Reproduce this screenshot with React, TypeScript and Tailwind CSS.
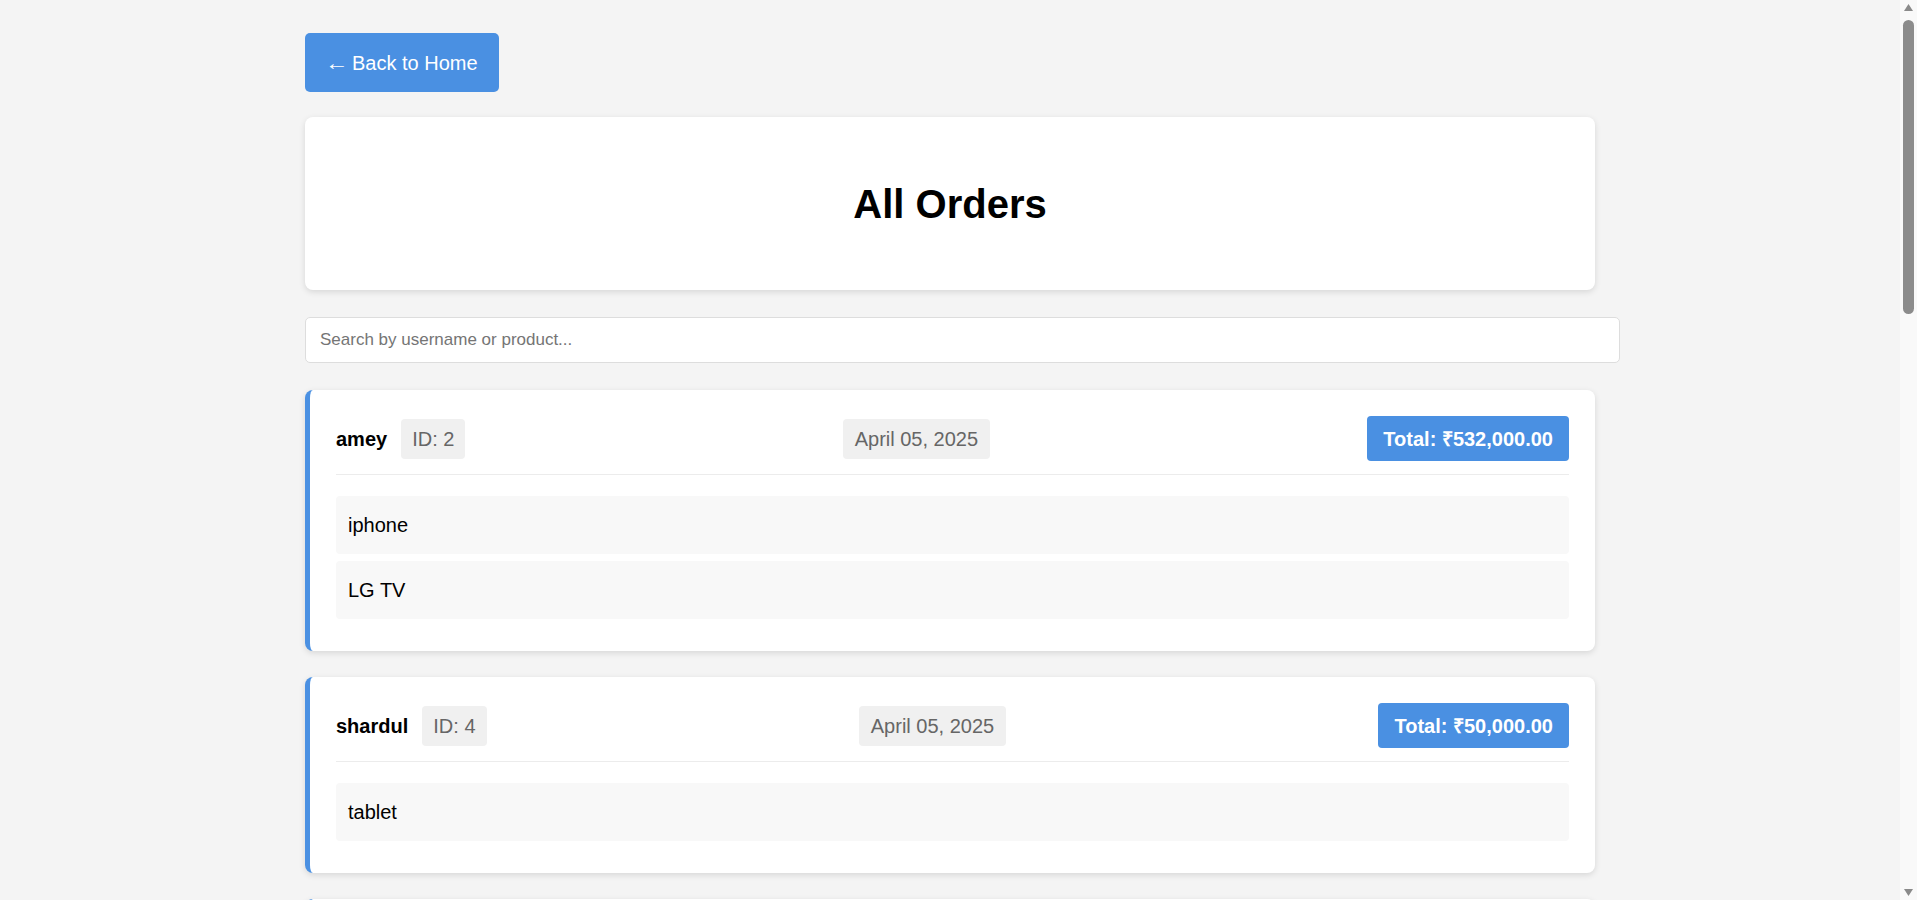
import React, { useState } from "react";

type Order = {
  id: number;
  username: string;
  date: string;
  total: number;
  products: string[];
};

const orders: Order[] = [
  { id: 2, username: "amey", date: "April 05, 2025", total: 532000, products: ["iphone", "LG TV"] },
  { id: 4, username: "shardul", date: "April 05, 2025", total: 50000, products: ["tablet"] },
  { id: 5, username: "rahul", date: "April 06, 2025", total: 85000, products: ["laptop", "mouse"] },
  { id: 7, username: "amey", date: "April 07, 2025", total: 12000, products: ["headphones"] },
  { id: 8, username: "priya", date: "April 08, 2025", total: 145000, products: ["Samsung TV", "soundbar"] },
  { id: 9, username: "shardul", date: "April 09, 2025", total: 30000, products: ["smartwatch"] },
  { id: 11, username: "neha", date: "April 10, 2025", total: 72000, products: ["camera", "tripod"] },
  { id: 12, username: "rahul", date: "April 11, 2025", total: 25000, products: ["keyboard"] },
  { id: 14, username: "amey", date: "April 12, 2025", total: 98000, products: ["iphone"] },
];

function money(n: number) {
  const [intPart, dec] = n.toFixed(2).split(".");
  const withCommas = intPart.replace(/\B(?=(\d{3})+(?!\d))/g, ",");
  return `₹${withCommas}.${dec}`;
}

function OrderCard({ order }: { order: Order }) {
  return (
    <div className="bg-white rounded-[8px] border-l-[5px] border-[#4a90e2] shadow-[0_2px_6px_rgba(0,0,0,0.12)] px-[26px] pt-[26px] pb-[32px] mb-[26px]">
      <div className="flex items-center justify-between pb-[13px] border-b border-[#ececec]">
        <div className="flex items-center gap-[14px]">
          <span className="text-[20px] font-bold text-black">{order.username}</span>
          <span className="h-[40px] flex items-center px-[11px] rounded-[4px] bg-[#f0f0f0] text-[20px] text-[#666]">
            ID: {order.id}
          </span>
        </div>
        <span className="h-[40px] flex items-center px-[12px] rounded-[4px] bg-[#f0f0f0] text-[20px] text-[#666]">
          {order.date}
        </span>
        <span className="h-[45px] flex items-center px-[16px] rounded-[4px] bg-[#4a90e2] text-[20px] font-bold text-white">
          Total: {money(order.total)}
        </span>
      </div>
      <div className="mt-[21px] flex flex-col gap-[7px]">
        {order.products.map((p, i) => (
          <div key={i} className="h-[58px] flex items-center px-[12px] rounded-[4px] bg-[#f8f8f8] text-[20px] text-black">
            {p}
          </div>
        ))}
      </div>
    </div>
  );
}

function Scrollbar() {
  return (
    <div className="fixed top-0 right-0 w-[17px] h-screen bg-[#f9f9f9] flex flex-col items-center">
      <svg width="11" height="9" viewBox="0 0 11 9" className="mt-[3px]">
        <path d="M5.5 1 L10 8 L1 8 Z" fill="#8a8a8a" />
      </svg>
      <div className="mt-[8px] w-[11px] h-[294px] rounded-full bg-[#8c8c8c]" />
      <div className="flex-1" />
      <svg width="11" height="9" viewBox="0 0 11 9" className="mb-[3px]">
        <path d="M1 1 L10 1 L5.5 8 Z" fill="#8a8a8a" />
      </svg>
    </div>
  );
}

export default function App() {
  const [search, setSearch] = useState("");

  const filtered = orders.filter(
    (o) =>
      o.username.toLowerCase().includes(search.toLowerCase()) ||
      o.products.some((p) => p.toLowerCase().includes(search.toLowerCase()))
  );

  return (
    <div className="min-h-screen bg-[#f4f4f4] pr-[17px] font-['Liberation_Sans',Arial,sans-serif]">
      <div className="w-[1290px] mx-auto pt-[33px] pb-[8px]">
        <button className="w-[194px] h-[59px] pl-[20px] flex items-center gap-[7px] rounded-[5px] bg-[#4a90e2] text-white text-[20px]">
          <span className="inline-block w-[20px] scale-x-[1.18] origin-left">←</span>
          <span>Back to Home</span>
        </button>
        <div className="mt-[25px] bg-white rounded-[8px] shadow-[0_2px_6px_rgba(0,0,0,0.12)] h-[173px] flex items-center justify-center">
          <h1 className="text-[40px] font-bold text-black">All Orders</h1>
        </div>
        <input
          type="text"
          value={search}
          onChange={(e) => setSearch(e.target.value)}
          placeholder="Search by username or product..."
          className="mt-[27px] mb-[27px] w-[1315px] h-[46px] px-[14px] rounded-[5px] border border-[#dddddd] bg-white text-[17px] text-black placeholder:text-[#757575] outline-none"
        />
        {filtered.map((o) => (
          <OrderCard key={o.id} order={o} />
        ))}
      </div>
      <Scrollbar />
    </div>
  );
}
